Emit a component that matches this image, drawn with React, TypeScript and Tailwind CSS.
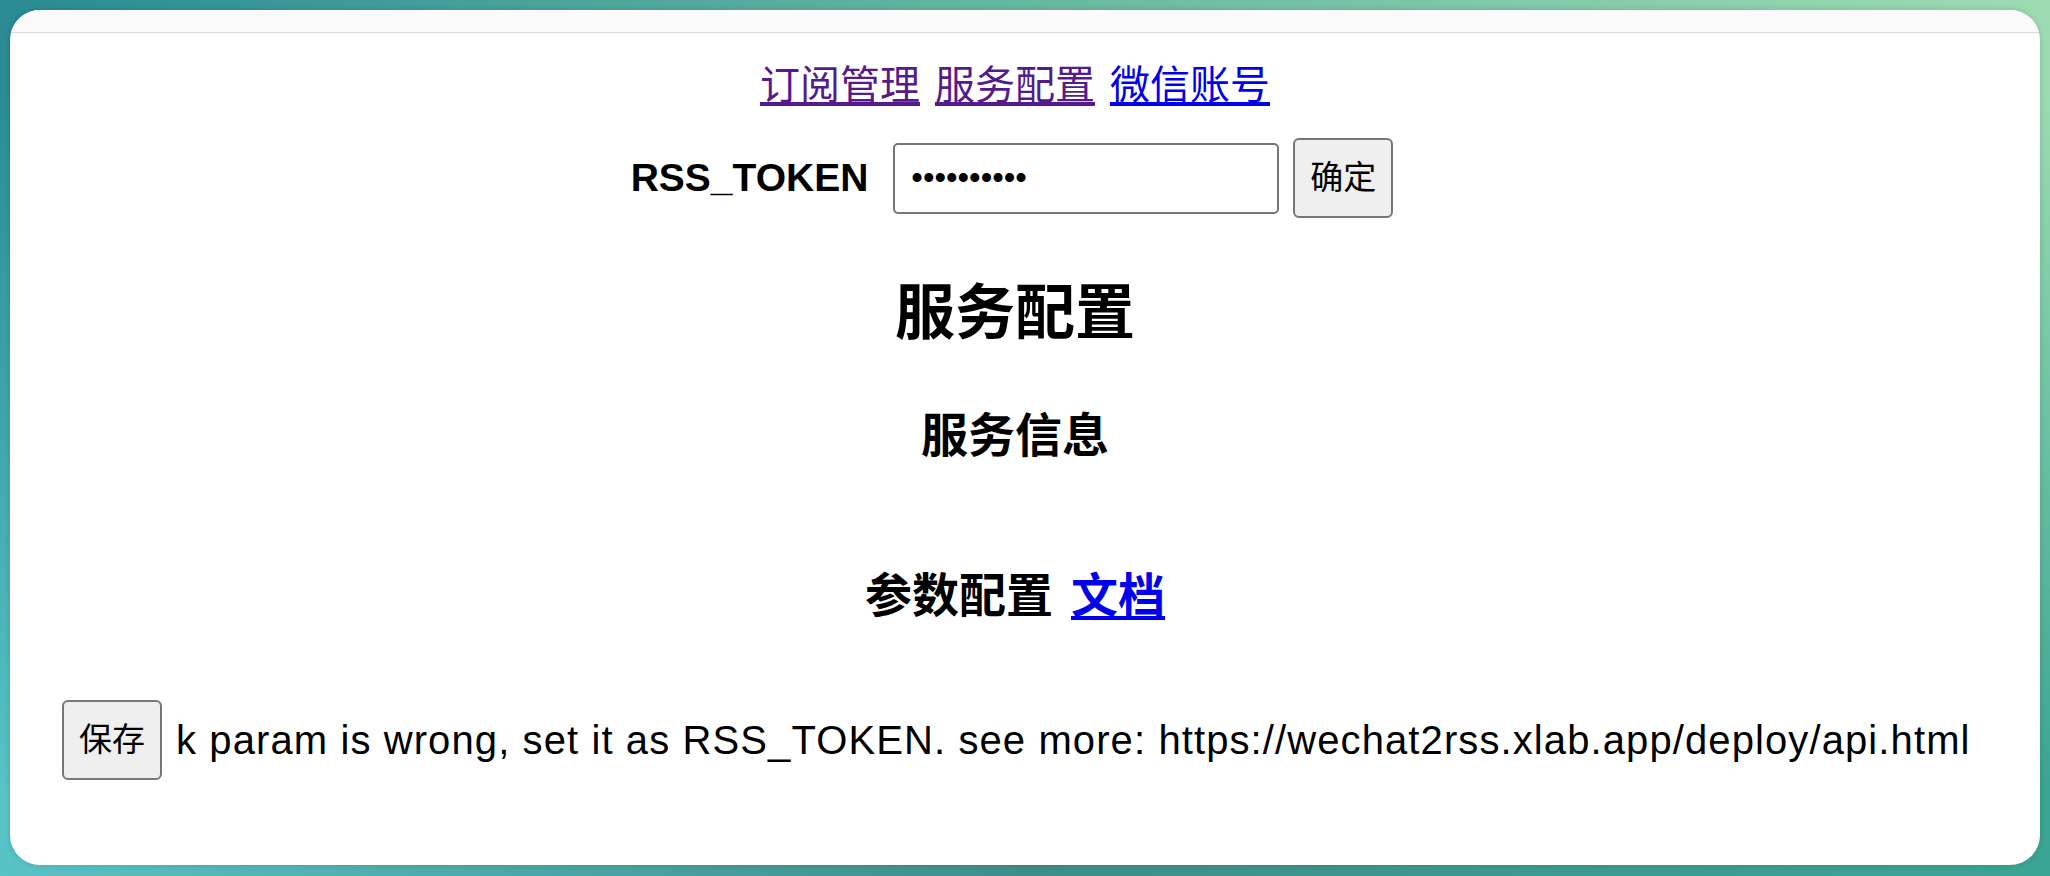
import React from 'react';

const links = [
    { label: '订阅管理', color: 'text-[#551a8b] decoration-[#551a8b]' },
    { label: '服务配置', color: 'text-[#551a8b] decoration-[#551a8b]' },
    { label: '微信账号', color: 'text-[#0000ee] decoration-[#0000ee]' },
];

const App = () => {
    return (
        <div className="relative h-[876px] w-[2050px] overflow-hidden bg-[linear-gradient(to_right,#58c3c7,#3f8d89_50%,#3aa693)] px-[10px] pt-[10px] font-['Liberation_Sans','Noto_Sans_CJK_SC',sans-serif]">
            {/* top half of the desktop gradient, faded into the bottom one */}
            <div className="absolute inset-0 bg-[linear-gradient(to_right,#2a8b94,#62b4a0_45%,#9ddcb2)] [mask-image:linear-gradient(to_bottom,black_10%,transparent_90%)]" />

            <div className="relative z-10 flex h-[855px] flex-col overflow-hidden rounded-[30px] bg-white shadow-[0_0_6px_rgba(0,0,0,0.15)]">
                <div className="h-[23px] shrink-0 border-b border-[#dcdcdc] bg-[#fafafa]" />

                <main className="flex flex-col pl-[50px] pr-[70px] text-[40px] leading-[46px] text-black">
                    <nav className="mt-[29px] flex justify-center gap-[15px]">
                        {links.map((l) => (
                            <a key={l.label} href="#" className={`underline underline-offset-[3px] ${l.color}`}>
                                {l.label}
                            </a>
                        ))}
                    </nav>

                    <div className="mt-[30px] flex items-center justify-center pr-[6px]">
                        <label htmlFor="token" className="mr-[25px] text-[39px] font-bold">RSS_TOKEN</label>
                        <input
                            id="token"
                            type="password"
                            defaultValue="0123456789"
                            className="h-[71px] w-[386px] rounded-[5px] border-2 border-[#767676] bg-white pl-[16px] text-[33px] outline-none"
                        />
                        <button
                            type="button"
                            className="ml-[14px] h-[80px] w-[100px] rounded-[6px] border-2 border-[#767676] bg-[#efefef] text-[33px] leading-[40px]"
                        >
                            确定
                        </button>
                    </div>

                    <h2 className="mt-[61px] text-center text-[60px] font-bold leading-[69px]">服务配置</h2>
                    <h3 className="mt-[61px] text-center text-[47px] font-bold leading-[54px]">服务信息</h3>
                    <h3 className="mt-[106px] flex justify-center gap-[18px] text-[47px] font-bold leading-[54px]">
                        <span>参数配置</span>
                        <a href="#" className="text-[#0000ee] underline underline-offset-[4px]">文档</a>
                    </h3>

                    <div className="mt-[77px] flex items-center gap-[14px] whitespace-nowrap pl-[2px]">
                        <button
                            type="button"
                            className="h-[80px] w-[100px] shrink-0 rounded-[6px] border-2 border-[#767676] bg-[#efefef] text-[33px] leading-[40px]"
                        >
                            保存
                        </button>
                        <span className="tracking-[1.1px]">
                            k param is wrong, set it as RSS_TOKEN. see more: https://wechat2rss.xlab.app/deploy/api.html
                        </span>
                    </div>
                </main>
            </div>
        </div>
    );
};

export default App;
